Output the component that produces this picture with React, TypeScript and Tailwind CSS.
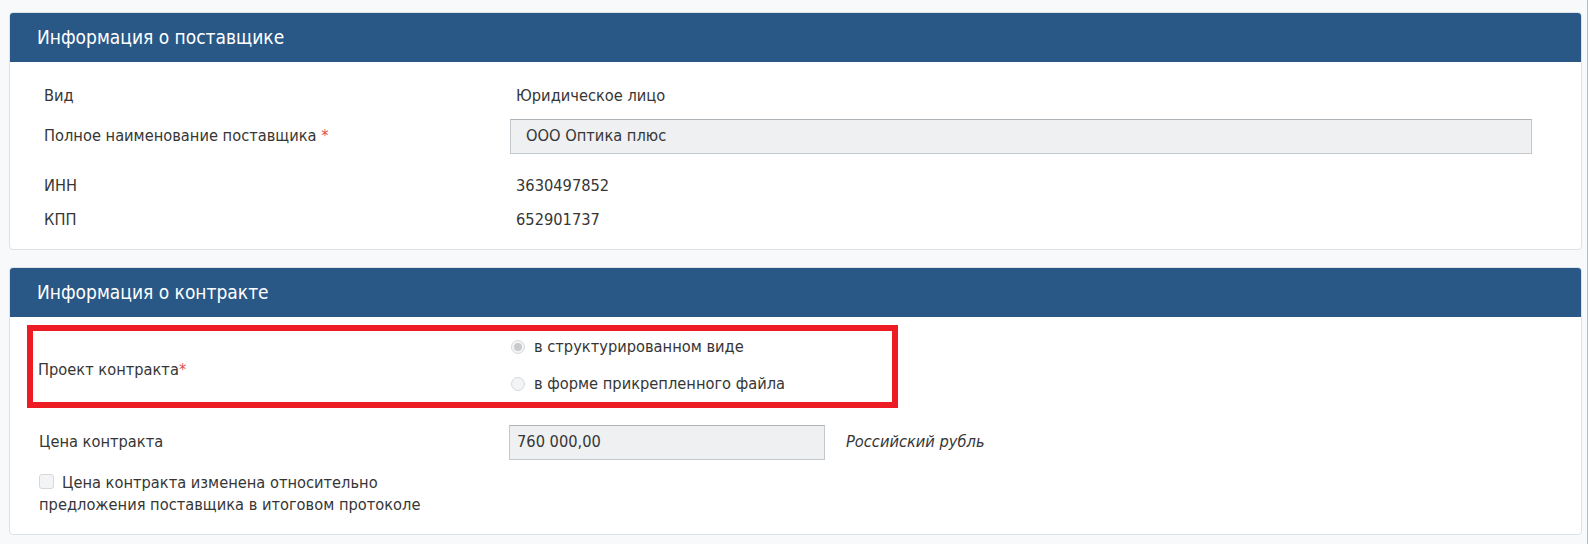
import React from "react";

const font = { fontFamily: '"DejaVu Sans Condensed", "DejaVu Sans", Verdana, sans-serif' };

function Radio({ checked }: { checked?: boolean }) {
  return (
    <span className="inline-flex h-[14px] w-[14px] shrink-0 items-center justify-center rounded-full border border-[#d6d9dc] bg-[#f3f4f5]">
      {checked ? <span className="h-[8px] w-[8px] rounded-full bg-[#c9cccf]" /> : null}
    </span>
  );
}

export default function App() {
  return (
    <div
      className="min-h-[544px] w-[1588px] border-r border-[#b9bcbf] bg-[#f8f9fa] pl-[9px] pr-[5px] pt-[12px] text-[16.3px] text-[#363636] font-stretch-condensed"
      style={font}
    >
      {/* Panel 1 */}
      <div className="overflow-hidden rounded-[4px] border border-[#dbe3e8] bg-white">
        <div className="flex h-[49px] items-center bg-[#295887] pl-[27px] text-[19px] text-white">
          Информация о поставщике
        </div>
        <div className="pb-[12px] pl-[34px] pr-[49px] pt-[17px]">
          <div className="flex h-[34px] items-center">
            <div className="w-[466px] shrink-0">Вид</div>
            <div className="pl-[6px]">Юридическое лицо</div>
          </div>
          <div className="mt-[6px] flex h-[35px] items-center">
            <div className="w-[466px] shrink-0">
              Полное наименование поставщика <span className="text-[#d9534f]">*</span>
            </div>
            <div className="flex h-[35px] flex-1 items-center border border-[#c3c8cc] border-t-[#aeb3b7] bg-[#eef0f2] pl-[15px]">
              ООО Оптика плюс
            </div>
          </div>
          <div className="mt-[15px] flex h-[34px] items-center">
            <div className="w-[466px] shrink-0">ИНН</div>
            <div className="pl-[6px]">3630497852</div>
          </div>
          <div className="flex h-[34px] items-center">
            <div className="w-[466px] shrink-0">КПП</div>
            <div className="pl-[6px]">652901737</div>
          </div>
        </div>
      </div>

      {/* Panel 2 */}
      <div className="mt-[17px] overflow-hidden rounded-[4px] border border-[#dbe3e8] bg-white">
        <div className="flex h-[49px] items-center bg-[#295887] pl-[27px] text-[19px] text-white">
          Информация о контракте
        </div>
        <div className="pb-[18px] pt-[8px]">
          <div className="ml-[17px] w-[871px] border-[6px] border-[#ed1c24] pb-[2px] pl-[5px] pt-0">
            <div className="flex items-center">
              <div className="w-[473px] shrink-0 pt-[10px]">
                Проект контракта<span className="text-[#d9534f]">*</span>
              </div>
              <div className="flex flex-col gap-[5px]">
                <div className="flex h-[32px] items-center gap-[9px]">
                  <Radio checked />
                  <span>в структурированном виде</span>
                </div>
                <div className="flex h-[32px] items-center gap-[9px]">
                  <Radio />
                  <span>в форме прикрепленного файла</span>
                </div>
              </div>
            </div>
          </div>
          <div className="mt-[17px] flex h-[35px] items-center pl-[29px]">
            <div className="w-[470px] shrink-0">Цена контракта</div>
            <div className="flex h-[35px] w-[316px] items-center border border-[#c3c8cc] border-t-[#aeb3b7] bg-[#eef0f2] pl-[7px]">
              760 000,00
            </div>
            <div className="pl-[21px] italic">Российский рубль</div>
          </div>
          <div className="mt-[12px] pl-[29px] leading-[22px]">
            <span className="mr-[8px] inline-block h-[15px] w-[15px] rounded-[3px] border border-[#d6d9dc] bg-[#f3f4f5] align-[-1px]" />
            Цена контракта изменена относительно
            <br />
            предложения поставщика в итоговом протоколе
          </div>
        </div>
      </div>
    </div>
  );
}
